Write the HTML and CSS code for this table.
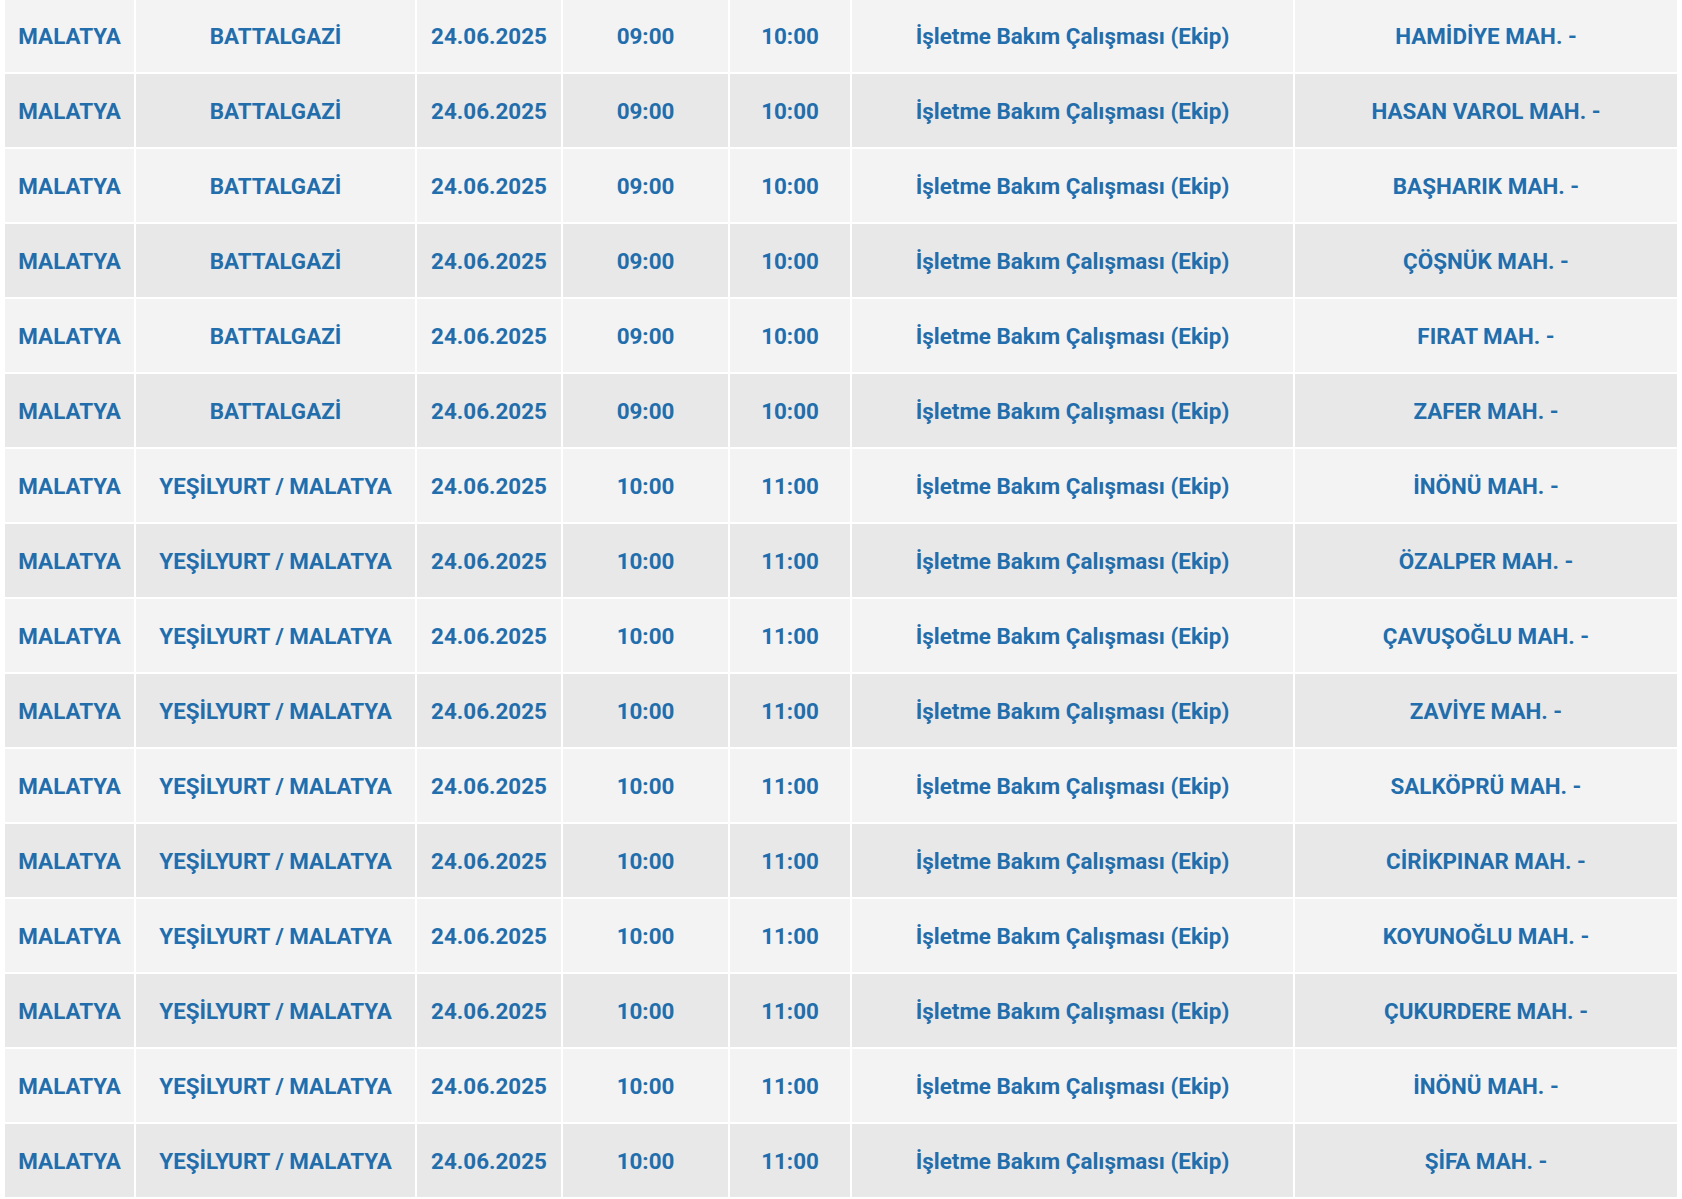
FILE: index.html
```html
<!DOCTYPE html>
<html lang="tr">
<head>
<meta charset="utf-8">
<title>Kesinti Listesi</title>
<link rel="stylesheet" href="styles.css">
</head>
<body>
<table class="outages">
<colgroup>
<col class="c-il"><col class="c-ilce"><col class="c-tarih"><col class="c-bas"><col class="c-bit"><col class="c-neden"><col class="c-yer">
</colgroup>
<tbody>
<tr><td>MALATYA</td><td>BATTALGAZİ</td><td>24.06.2025</td><td>09:00</td><td>10:00</td><td>İşletme Bakım Çalışması (Ekip)</td><td>HAMİDİYE MAH. -</td></tr>
<tr><td>MALATYA</td><td>BATTALGAZİ</td><td>24.06.2025</td><td>09:00</td><td>10:00</td><td>İşletme Bakım Çalışması (Ekip)</td><td>HASAN VAROL MAH. -</td></tr>
<tr><td>MALATYA</td><td>BATTALGAZİ</td><td>24.06.2025</td><td>09:00</td><td>10:00</td><td>İşletme Bakım Çalışması (Ekip)</td><td>BAŞHARIK MAH. -</td></tr>
<tr><td>MALATYA</td><td>BATTALGAZİ</td><td>24.06.2025</td><td>09:00</td><td>10:00</td><td>İşletme Bakım Çalışması (Ekip)</td><td>ÇÖŞNÜK MAH. -</td></tr>
<tr><td>MALATYA</td><td>BATTALGAZİ</td><td>24.06.2025</td><td>09:00</td><td>10:00</td><td>İşletme Bakım Çalışması (Ekip)</td><td>FIRAT MAH. -</td></tr>
<tr><td>MALATYA</td><td>BATTALGAZİ</td><td>24.06.2025</td><td>09:00</td><td>10:00</td><td>İşletme Bakım Çalışması (Ekip)</td><td>ZAFER MAH. -</td></tr>
<tr><td>MALATYA</td><td>YEŞİLYURT / MALATYA</td><td>24.06.2025</td><td>10:00</td><td>11:00</td><td>İşletme Bakım Çalışması (Ekip)</td><td>İNÖNÜ MAH. -</td></tr>
<tr><td>MALATYA</td><td>YEŞİLYURT / MALATYA</td><td>24.06.2025</td><td>10:00</td><td>11:00</td><td>İşletme Bakım Çalışması (Ekip)</td><td>ÖZALPER MAH. -</td></tr>
<tr><td>MALATYA</td><td>YEŞİLYURT / MALATYA</td><td>24.06.2025</td><td>10:00</td><td>11:00</td><td>İşletme Bakım Çalışması (Ekip)</td><td>ÇAVUŞOĞLU MAH. -</td></tr>
<tr><td>MALATYA</td><td>YEŞİLYURT / MALATYA</td><td>24.06.2025</td><td>10:00</td><td>11:00</td><td>İşletme Bakım Çalışması (Ekip)</td><td>ZAVİYE MAH. -</td></tr>
<tr><td>MALATYA</td><td>YEŞİLYURT / MALATYA</td><td>24.06.2025</td><td>10:00</td><td>11:00</td><td>İşletme Bakım Çalışması (Ekip)</td><td>SALKÖPRÜ MAH. -</td></tr>
<tr><td>MALATYA</td><td>YEŞİLYURT / MALATYA</td><td>24.06.2025</td><td>10:00</td><td>11:00</td><td>İşletme Bakım Çalışması (Ekip)</td><td>CİRİKPINAR MAH. -</td></tr>
<tr><td>MALATYA</td><td>YEŞİLYURT / MALATYA</td><td>24.06.2025</td><td>10:00</td><td>11:00</td><td>İşletme Bakım Çalışması (Ekip)</td><td>KOYUNOĞLU MAH. -</td></tr>
<tr><td>MALATYA</td><td>YEŞİLYURT / MALATYA</td><td>24.06.2025</td><td>10:00</td><td>11:00</td><td>İşletme Bakım Çalışması (Ekip)</td><td>ÇUKURDERE MAH. -</td></tr>
<tr><td>MALATYA</td><td>YEŞİLYURT / MALATYA</td><td>24.06.2025</td><td>10:00</td><td>11:00</td><td>İşletme Bakım Çalışması (Ekip)</td><td>İNÖNÜ MAH. -</td></tr>
<tr><td>MALATYA</td><td>YEŞİLYURT / MALATYA</td><td>24.06.2025</td><td>10:00</td><td>11:00</td><td>İşletme Bakım Çalışması (Ekip)</td><td>ŞİFA MAH. -</td></tr>
</tbody>
</table>
</body>
</html>
```
FILE: styles.css
```css
html, body {
  margin: 0;
  padding: 0;
  background: #ffffff;
}

body {
  font-family: Roboto, "Liberation Sans", Arial, sans-serif;
  overflow: hidden;
}

.outages {
  border-collapse: separate;
  border-spacing: 2px;
  table-layout: fixed;
  width: 1676px;
  margin: -3px 0 0 3px;
}

.c-il { width: 129px; }
.c-ilce { width: 279px; }
.c-tarih { width: 144px; }
.c-bas { width: 165px; }
.c-bit { width: 120px; }
.c-neden { width: 441px; }
.c-yer { width: 382px; }

.outages td {
  height: 73px;
  padding: 0;
  line-height: 26px;
  text-align: center;
  vertical-align: middle;
  font-size: 22.4px;
  font-weight: 700;
  color: #226dab;
  white-space: nowrap;
  background: #f3f3f3;
}

.outages tr:nth-child(even) td {
  background: #e8e8e8;
}
```
